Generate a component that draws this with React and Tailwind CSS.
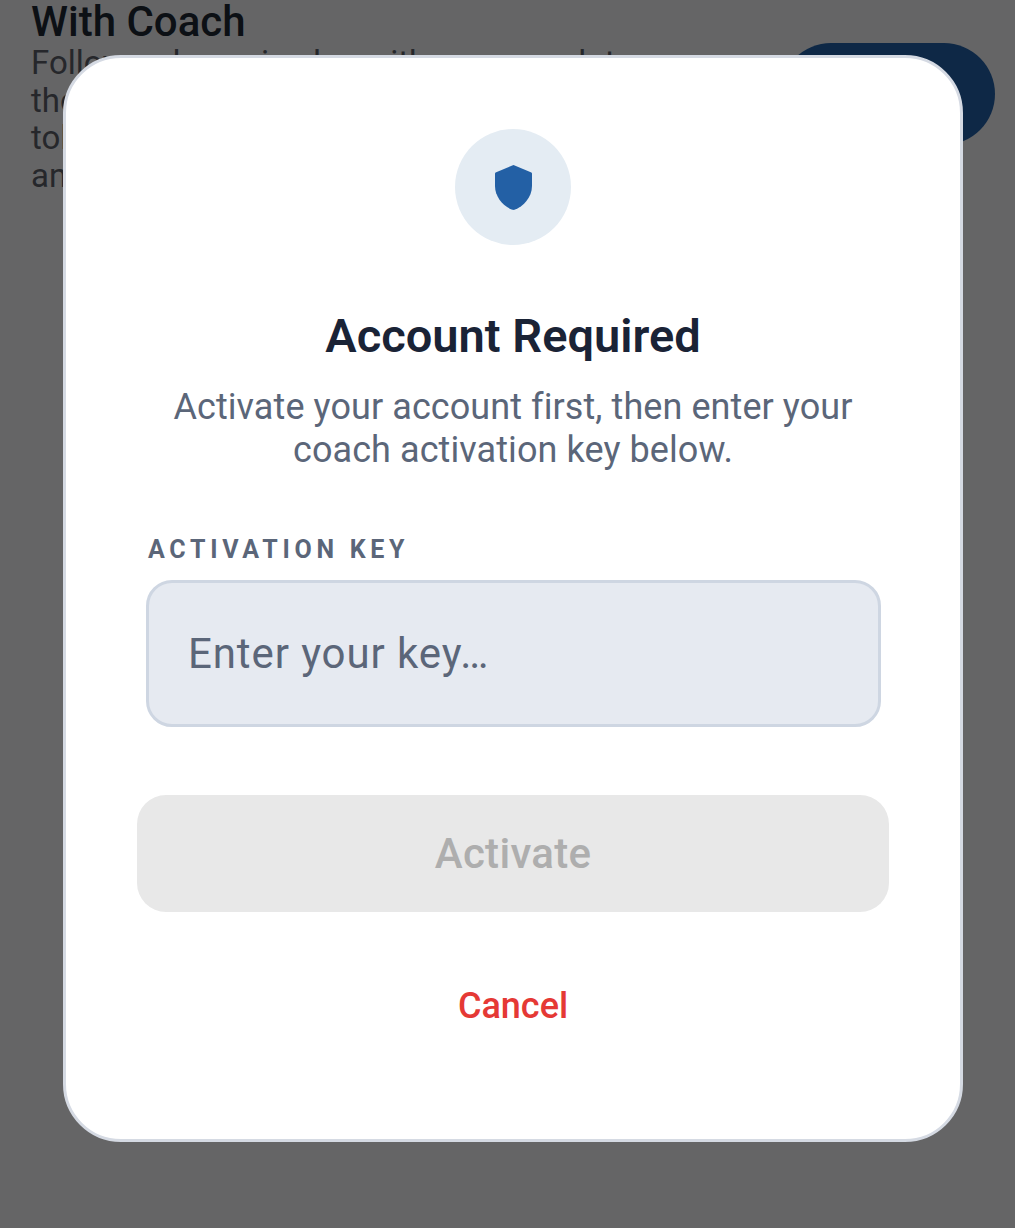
const roboto = { fontFamily: 'Roboto, "Liberation Sans", sans-serif' }

function ShieldIcon() {
  return (
    <svg width="37" height="45" viewBox="0 0 37 45" className="block ml-[1px]">
      <path
        d="M18.5 0 L36.4 7.4 C36.8 7.6 37 7.9 37 8.4 V21 C37 32 28.5 41.5 19.6 44.8 C18.9 45 18.1 45 17.4 44.8 C8.5 41.5 0 32 0 21 V8.4 C0 7.9 0.2 7.6 0.6 7.4 Z"
        fill="#2360a5"
      />
    </svg>
  )
}

function AccountModal() {
  return (
    <div className="absolute inset-0 z-10 bg-black/60 pt-[55px] pl-[63px]">
      <div className="w-[900px] h-[1087px] bg-white border-[3px] border-[#d5dae3] rounded-[58px] px-[71px] pt-[71px] flex flex-col items-center">
        <div className="w-[116px] h-[116px] rounded-full bg-[#e4ecf3] flex items-center justify-center">
          <ShieldIcon />
        </div>

        <h2 className="mt-[63px] text-[47px] leading-[56px] font-semibold text-[#1a2336] text-center">Account Required</h2>
        <p className="mt-[22px] text-[36px] leading-[43px] tracking-[0.08px] text-[#5b6679] text-center">
          Activate your account first, then enter your
          <br />
          coach activation key below.
        </p>

        <div className="w-full mt-[63px] pl-[9px] pr-[8px]">
          <label className="block pl-[2px] text-[25px] leading-[30px] font-bold tracking-[4.7px] text-[#5b6679]">ACTIVATION KEY</label>
          <input
            className="mt-[15px] w-full h-[147px] pl-[39px] pr-[40px] bg-[#e6eaf1] border-[3px] border-[#ced6e2] rounded-[26px] text-[42px] tracking-[0.9px] outline-none placeholder:text-[#5b6679]"
            placeholder="Enter your key…"
          />
        </div>

        <button className="mt-[68px] w-full h-[117px] rounded-[29px] bg-[#e8e8e8] text-[42px] font-medium tracking-[0.3px] text-[#aeaeae]">
          Activate
        </button>

        <button className="mt-[72px] text-[36px] leading-[44px] font-medium text-[#e53935]">Cancel</button>
      </div>
    </div>
  )
}

export default function App() {
  return (
    <div className="relative w-[1015px] h-[1228px] overflow-hidden bg-[#fcfdff]" style={roboto}>
      {/* page behind the dialog */}
      <div className="flex items-start justify-between pl-[31px] pr-[20px]">
        <div className="w-[700px]">
          <h1 className="text-[42px] leading-[44px] font-medium text-[#1f2a35]">With Coach</h1>
          <p className="text-[33px] leading-[37.5px] text-[#5f636d]">
            Follow a dynamic plan with your coach to
            <br />
            the
            <br />
            tol
            <br />
            an
          </p>
        </div>
        <button className="mt-[43px] w-[215px] h-[102px] rounded-full bg-[#2464ae]" />
      </div>

      <AccountModal />
    </div>
  )
}
